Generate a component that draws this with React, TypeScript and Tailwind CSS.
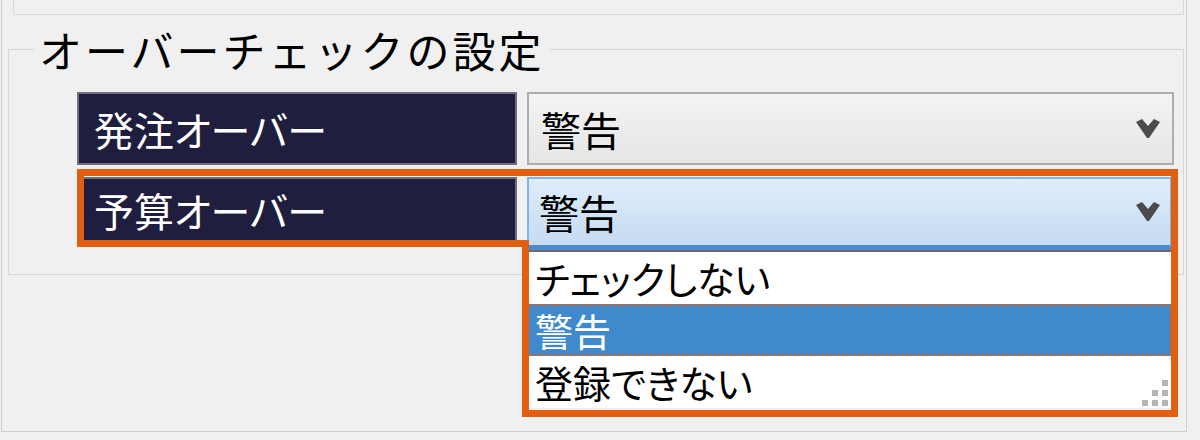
import { useState } from "react";

const jp = "font-['MS_UI_Gothic','Noto_Sans_CJK_JP',sans-serif]";
const narrow = "[font-feature-settings:'palt']";

function Chevron() {
  return (
    <svg width="24" height="20" viewBox="0 0 24 20" className="shrink-0">
      <polygon points="0,3 6,0 12,7 18,0 24,3 13,19 11,19" fill="#4b4b4b" />
    </svg>
  );
}

function Label({ text, short }: { text: string; short?: boolean }) {
  return (
    <div className={`w-[440px] ${short ? "h-[66px] self-start" : "h-[73px]"} bg-[#1f1e3e] border-2 border-[#6e6e7c] flex items-center pl-[15px] text-white text-[40px] leading-none ${narrow}`}>
      {text}
    </div>
  );
}

function Grip() {
  const cells = [
    [0, 0, 1],
    [0, 1, 1],
    [1, 1, 1],
  ];
  return (
    <div className="flex flex-col gap-[4px]">
      {cells.map((row, i) => (
        <div key={i} className="flex gap-[4px]">
          {row.map((c, j) => (
            <div key={j} className={c ? "w-[6px] h-[6px] bg-[#b4b4b4]" : "w-[6px] h-[6px]"} />
          ))}
        </div>
      ))}
    </div>
  );
}

export default function App() {
  const [options] = useState(["チェックしない", "警告", "登録できない"]);
  const selected = 1;

  return (
    <div className={`w-[1200px] h-[440px] bg-[#f0f0f0] relative overflow-hidden text-black ${jp}`}>
      <div className="h-[432px] ml-[1px] mr-[13px] border-l border-r border-b border-[#cfcfcf]">
        {/* bottom of the previous group */}
        <div className="h-[15px] ml-[11px] mr-[2px] border-l border-b border-r border-[#dadada]" />

        <fieldset className="mt-[13px] ml-[6px] mr-[2px] h-[247px] border border-[#d6d6d6]">
          <legend className="ml-[25px] px-[5px] text-[43px] tracking-[3px] leading-none">オーバーチェックの設定</legend>

          <div className={`pt-[21px] pl-[68px] flex flex-col gap-[12px] ${narrow}`}>
            <div className="flex gap-[10px]">
              <Label text="発注オーバー" />
              <div className="w-[647px] h-[73px] border-2 border-[#adadad] bg-gradient-to-b from-[#f3f3f3] to-[#e6e6e6] flex items-center justify-between pl-[12px] pr-[12px] text-[40px] leading-none">
                <span>警告</span>
                <Chevron />
              </div>
            </div>

            <div className="flex gap-[10px] items-start">
              <Label text="予算オーバー" short />
              <div className="w-[645px] flex flex-col">
                <div className="h-[73px] border-l-2 border-t-2 border-r-2 border-[#7eb4ea] border-b-[5px] border-b-[#4a8bd0] bg-gradient-to-b from-[#deedfb] to-[#c6dcf2] flex items-center justify-between pl-[10px] pr-[10px] text-[40px] leading-none">
                  <span>警告</span>
                  <Chevron />
                </div>
                <div className="border-t-2 border-[#6a6a6a] bg-white text-[38px] leading-none">
                  {options.map((o, i) =>
                    i === selected ? (
                      <div key={o} className="h-[52px] bg-[#4089cd] text-white border-2 border-dotted border-[#e0620e] flex items-center pl-[6px]">
                        {o}
                      </div>
                    ) : (
                      <div key={o} className="h-[52px] flex items-center pl-[8px] relative">
                        {o}
                        {i === options.length - 1 && (
                          <div className="absolute right-[4px] bottom-[2px]">
                            <Grip />
                          </div>
                        )}
                      </div>
                    )
                  )}
                </div>
              </div>
            </div>
          </div>
        </fieldset>
      </div>

      {/* orange highlight annotation */}
      <svg className="absolute left-0 top-0 pointer-events-none" width="1200" height="440">
        <path
          d="M80.5 172.5 H1174.5 V413.5 H525.5 V243.5 H80.5 Z"
          fill="none"
          stroke="#e05f10"
          strokeWidth="7"
          strokeLinejoin="miter"
        />
      </svg>
    </div>
  );
}
